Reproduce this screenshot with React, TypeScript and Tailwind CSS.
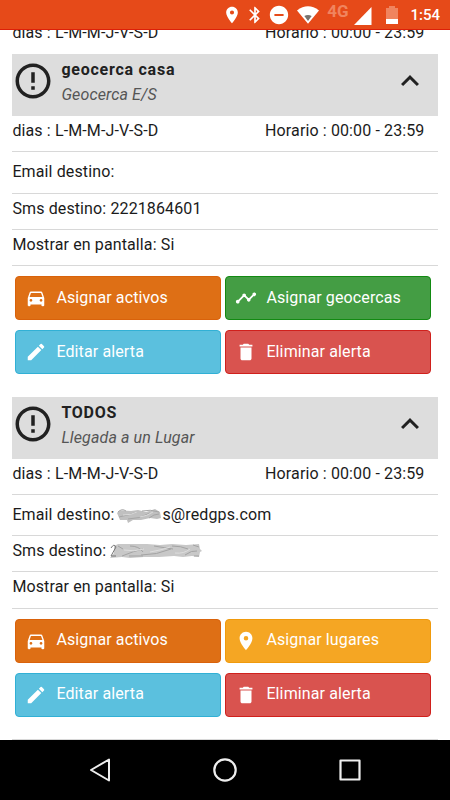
import type { ReactNode } from "react";
import {
    MdBluetooth,
    MdDelete,
    MdDirectionsCar,
    MdEdit,
    MdErrorOutline,
    MdExpandLess,
    MdPlace,
    MdRemoveCircle,
    MdTimeline,
} from "react-icons/md";

function StatusBar() {
    return (
        <div className="flex h-[30px] shrink-0 items-start border-b border-[#dd1f08] bg-[#e64a19] pr-[10px] tracking-normal text-white">
            <div className="ml-auto flex h-[29px] items-center">
                <MdPlace className="mr-[3px] size-[20px]" />
                <MdBluetooth className="mr-[3px] size-[20px]" />
                <MdRemoveCircle className="mr-[7px] size-[22px]" />
                <svg className="mr-[8px] h-[18px] w-[22px]" viewBox="0 0 24 18" preserveAspectRatio="none">
                    <path d="M0 4.500C4 1.500 8 .2 12 .2s8 1.300 12 4.300L12 17.800z" fill="#fff" />
                    <path d="M8 10c2.500-1.300 5.500-1.300 8 0l-4 5z" fill="#77736f" />
                </svg>
                <span className="mr-[6px] mb-[7px] font-bold text-[17px] leading-none text-[#f0845f]">4G</span>
                <svg className="mr-[14px] mt-[2px] h-[18px] w-[18px]" viewBox="0 0 18 18">
                    <path d="M17.500 0v18H0z" fill="#fff" />
                </svg>
                <svg className="mr-[12px] h-[18px] w-[12px]" viewBox="0 0 12 18">
                    <path d="M0 2h3V0h6v2h3v16H0z" fill="#f0845f" />
                    <path d="M0 13h12v5H0z" fill="#fff" />
                </svg>
                <span className="mt-[2px] text-[15px] font-medium leading-none">1:54</span>
            </div>
        </div>
    );
}

interface ActionButtonProps {
    icon: ReactNode;
    label: string;
    color: string;
}

function ActionButton({ icon, label, color }: ActionButtonProps) {
    return (
        <button className={`flex h-[44px] items-center rounded-[4px] border pl-[9px] text-white ${color}`}>
            <span className="flex w-[22px] justify-center text-[22px]">{icon}</span>
            <span className="ml-[9px] pb-px">{label}</span>
        </button>
    );
}

function ScheduleRow() {
    return (
        <div className="flex h-[36px] justify-between border-b border-[#d8d8d8] pt-[3px] pr-[13px]">
            <span>dias : L-M-M-J-V-S-D</span>
            <span>Horario : 00:00 - 23:59</span>
        </div>
    );
}

interface AlertCardProps {
    title: string;
    type: string;
    email?: ReactNode;
    sms: ReactNode;
    assign: ReactNode;
}

function AlertCard({ title, type, email, sms, assign }: AlertCardProps) {
    return (
        <div className="h-[342.500px]">
            <div className="flex h-[62px] bg-[#dddddd] text-[#212121]">
                <MdErrorOutline className="mt-[6px] size-[42px] shrink-0" />
                <div className="ml-[7px] pt-[4px]">
                    <p className="font-bold tracking-[0.750px]">{title}</p>
                    <p className="mt-px italic text-[#555555]">{type}</p>
                </div>
                <MdExpandLess className="mt-[9px] mr-[10px] ml-auto size-[36px]" />
            </div>
            <ScheduleRow />
            <div className="h-[41.500px] border-b border-[#d8d8d8] pt-[8px]">Email destino: {email}</div>
            <div className="h-[36px] border-b border-[#d8d8d8] pt-[3px]">Sms destino: {sms}</div>
            <div className="h-[36.500px] border-b border-[#d8d8d8] pt-[3px]">Mostrar en pantalla: Si</div>
            <div className="mt-[10px] ml-[3px] grid w-[416px] grid-cols-2 gap-x-[4px] gap-y-[10px]">
                <ActionButton icon={<MdDirectionsCar />} label="Asignar activos" color="bg-[#de6f15] border-[#d9620b]" />
                {assign}
                <ActionButton icon={<MdEdit />} label="Editar alerta" color="bg-[#5bc0de] border-[#31b0d5]" />
                <ActionButton icon={<MdDelete />} label="Eliminar alerta" color="bg-[#d9534f] border-[#d0201c]" />
            </div>
        </div>
    );
}

function EmailSmudge() {
    return (
        <svg className="-mt-px -ml-[2px] inline h-[16px] w-[46px]" viewBox="0 0 46 16">
            <defs>
                <filter id="soft"><feGaussianBlur stdDeviation="0.6" /></filter>
            </defs>
            <g filter="url(#soft)">
                <path d="M1 6c3-4 9-2 14-2l7-1 8 2 9-3 5 3 1 6-4 1-7-1-9 2-8 0-5 3-1-3-7 0z" fill="#c0c0c0" />
                <path d="M2 5q4-4 8-1M3 10q10-2 18-5M12 12q12 0 22-6M26 4q8-2 17 1M33 11q5-4 10-4" fill="none" stroke="#a5a5a5" />
                <path d="M7 8q9 0 14-3M24 10q7-1 13-5" fill="none" stroke="#dadada" />
            </g>
        </svg>
    );
}

function SmsSmudge() {
    return (
        <svg className="-mt-px inline h-[16px] w-[92px]" viewBox="0 0 92 16">
            <g filter="url(#soft)">
                <path d="M4 3l4-2 14 0 15 0 13 1 12-1 14 1 13-1 1 5 2 2-2 1-1 5-7-1-9 1-9-1-15 1-15 0-14 1-8-1-12 1 4-5z" fill="#c8c8c8" />
                <path d="M1 5q3-5 5-1l-5 9h5" fill="none" stroke="#777" />
                <path d="M8 3l5 3M12 13q12-5 21-7M20 3q9 0 13 6M31 12q16 0 30-6M44 3q12 2 19 3M62 3q9 0 16 3M75 12q7-5 12-4M83 2l6 2M84 13h5M19 13h14" fill="none" stroke="#a3a3a3" />
                <path d="M14 7q10 2 20-1M40 9q12-2 20-5M65 10q9 1 15-4" fill="none" stroke="#dedede" />
            </g>
        </svg>
    );
}

function NavigationBar() {
    return (
        <div className="flex h-[60px] shrink-0 items-center justify-between bg-black pr-[89px] pl-[89px]">
            <svg className="h-[24px] w-[22px]" viewBox="0 0 22 24" fill="none" stroke="#eee" strokeWidth="2" strokeLinejoin="round">
                <path d="M2 12 20 1.500v21z" />
            </svg>
            <svg className="size-[24px]" viewBox="0 0 24 24" fill="none" stroke="#eee" strokeWidth="2.200">
                <circle cx="12" cy="12" r="10.700" />
            </svg>
            <svg className="size-[22px]" viewBox="0 0 22 22" fill="none" stroke="#eee" strokeWidth="2.200" strokeLinejoin="round">
                <path d="M1.500 1.500h19v19h-19z" />
            </svg>
        </div>
    );
}

export default function App() {
    return (
        <div className="flex h-[800px] w-[450px] flex-col overflow-hidden bg-white font-['Roboto',sans-serif] text-[16px] leading-[24px] tracking-[0.120px] text-[#1b1b1b]">
            <StatusBar />
            <div className="h-[710px] overflow-hidden pr-[12.500px] pl-[12.400px]">
                <div className="-mt-[9px] mb-[9px] flex h-[24px] justify-between pr-[13px]">
                    <span>dias : L-M-M-J-V-S-D</span>
                    <span>Horario : 00:00 - 23:59</span>
                </div>
                <AlertCard
                    title="geocerca casa"
                    type="Geocerca E/S"
                    sms="2221864601"
                    assign={<ActionButton icon={<MdTimeline />} label="Asignar geocercas" color="bg-[#449d44] border-[#128a12]" />}
                />
                <AlertCard
                    title="TODOS"
                    type="Llegada a un Lugar"
                    email={<><EmailSmudge />s@redgps.com</>}
                    sms={<SmsSmudge />}
                    assign={<ActionButton icon={<MdPlace />} label="Asignar lugares" color="bg-[#f5a623] border-[#f09a0c]" />}
                />
                <div className="border-t border-[#d8d8d8]" />
            </div>
            <NavigationBar />
        </div>
    );
}
